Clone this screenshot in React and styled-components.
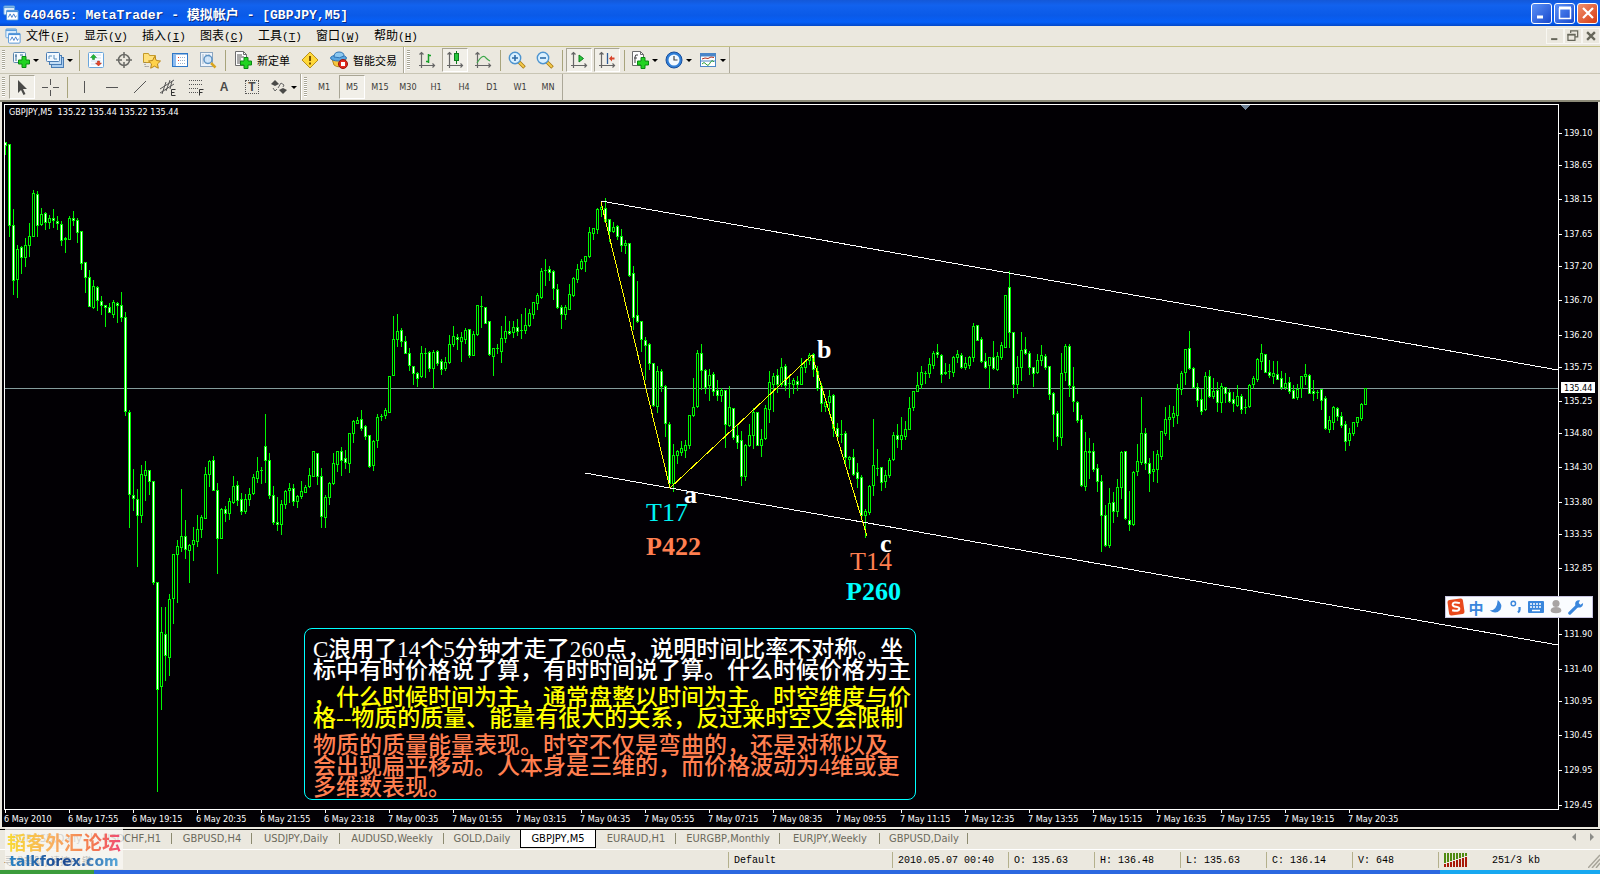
import styled, { createGlobalStyle, css } from "styled-components";

// [high, body top, body bottom, low, kind]  kind: 0 rising, 1 falling, 2 doji
const candles = [
  [142, 142, 145, 154, 1], [144, 144, 225, 236, 1], [209, 225, 280, 294, 1], [245, 249, 279, 297, 0],
  [246, 247, 257, 273, 1], [238, 245, 257, 266, 0], [223, 236, 245, 256, 0], [190, 193, 236, 236, 0],
  [191, 194, 225, 236, 1], [208, 214, 224, 225, 0], [212, 213, 222, 229, 1], [215, 218, 222, 228, 0],
  [209, 218, 220, 227, 1], [216, 221, 223, 229, 1], [221, 224, 240, 245, 1], [237, 238, 239, 252, 1],
  [216, 218, 239, 239, 0], [211, 218, 220, 225, 1], [218, 220, 232, 242, 1], [231, 231, 263, 269, 1],
  [262, 262, 277, 292, 1], [270, 277, 306, 306, 1], [280, 286, 307, 308, 0], [286, 287, 300, 310, 1],
  [296, 301, 305, 314, 1], [305, 305, 307, 326, 1], [303, 307, 312, 312, 1], [300, 302, 314, 317, 0],
  [302, 303, 305, 322, 1], [292, 305, 317, 321, 1], [312, 317, 411, 415, 1], [410, 412, 494, 527, 1],
  [469, 495, 498, 510, 1], [489, 499, 515, 566, 1], [465, 474, 515, 522, 0], [461, 470, 475, 500, 0],
  [470, 470, 481, 494, 1], [481, 481, 582, 584, 1], [582, 582, 689, 791, 1], [607, 632, 686, 709, 0],
  [607, 634, 655, 680, 1], [594, 599, 657, 675, 0], [554, 554, 598, 623, 0], [540, 546, 554, 602, 0],
  [489, 536, 547, 551, 0], [520, 536, 549, 558, 1], [544, 545, 550, 582, 0], [527, 540, 544, 560, 0],
  [515, 529, 541, 546, 0], [515, 517, 529, 537, 0], [467, 474, 518, 518, 0], [460, 461, 474, 486, 0],
  [456, 460, 490, 490, 1], [483, 490, 538, 573, 1], [508, 509, 538, 538, 0], [506, 509, 513, 521, 1],
  [498, 501, 513, 519, 0], [476, 486, 502, 503, 0], [481, 485, 500, 505, 1], [493, 499, 511, 514, 1],
  [494, 499, 511, 513, 0], [488, 494, 499, 505, 0], [474, 477, 493, 494, 0], [457, 471, 478, 482, 0],
  [467, 470, 471, 483, 2], [414, 446, 460, 482, 1], [453, 460, 495, 498, 1], [486, 495, 522, 524, 1],
  [497, 522, 524, 530, 1], [500, 504, 524, 534, 0], [490, 491, 504, 508, 0], [483, 488, 490, 502, 0],
  [484, 488, 501, 505, 1], [495, 496, 501, 507, 0], [481, 491, 496, 498, 0], [485, 487, 492, 492, 0],
  [468, 475, 486, 487, 0], [451, 451, 476, 476, 0], [453, 453, 476, 484, 1], [468, 476, 516, 527, 1],
  [495, 497, 517, 527, 0], [482, 483, 497, 504, 0], [453, 463, 483, 484, 0], [451, 451, 464, 471, 0],
  [447, 451, 460, 475, 1], [450, 458, 462, 468, 1], [433, 433, 463, 472, 0], [420, 421, 433, 442, 0],
  [417, 420, 423, 423, 0], [410, 419, 428, 430, 1], [425, 426, 436, 439, 1], [435, 435, 466, 467, 1],
  [440, 441, 465, 470, 0], [414, 417, 440, 447, 0], [414, 416, 417, 420, 2], [408, 410, 415, 418, 0],
  [376, 376, 412, 412, 0], [316, 339, 375, 375, 0], [314, 331, 339, 346, 0], [328, 330, 341, 346, 1],
  [336, 341, 353, 353, 1], [348, 353, 365, 370, 1], [366, 366, 373, 384, 1], [372, 373, 378, 386, 1],
  [346, 353, 376, 377, 0], [348, 353, 354, 377, 2], [351, 352, 368, 371, 1], [350, 352, 368, 388, 0],
  [350, 351, 363, 365, 1], [359, 361, 369, 374, 1], [357, 362, 368, 370, 0], [335, 344, 362, 363, 0],
  [326, 336, 344, 346, 0], [334, 337, 339, 349, 1], [332, 337, 341, 361, 0], [328, 330, 339, 343, 0],
  [329, 329, 355, 357, 1], [331, 334, 355, 355, 0], [305, 305, 334, 335, 0], [296, 306, 307, 327, 2],
  [307, 307, 323, 323, 1], [321, 321, 354, 355, 1], [348, 348, 356, 375, 0], [344, 348, 349, 353, 2],
  [326, 338, 351, 362, 0], [316, 331, 338, 342, 0], [321, 331, 333, 334, 1], [321, 327, 332, 337, 0],
  [319, 327, 331, 335, 1], [314, 330, 331, 338, 2], [308, 325, 330, 333, 0], [309, 313, 325, 326, 0],
  [302, 302, 314, 318, 0], [293, 295, 303, 309, 0], [268, 271, 297, 298, 0], [259, 270, 271, 285, 2],
  [266, 269, 272, 280, 1], [270, 271, 288, 299, 1], [284, 289, 307, 308, 1], [305, 307, 314, 328, 1],
  [305, 307, 314, 319, 0], [284, 294, 309, 309, 0], [277, 278, 295, 296, 0], [264, 269, 279, 282, 0],
  [259, 261, 268, 269, 0], [256, 256, 261, 271, 0], [227, 232, 256, 257, 0], [228, 228, 233, 239, 0],
  [208, 209, 229, 233, 0], [202, 207, 209, 216, 0], [198, 208, 221, 221, 1], [219, 219, 231, 241, 1],
  [222, 227, 231, 232, 0], [225, 226, 236, 239, 1], [229, 236, 245, 251, 1], [240, 243, 245, 253, 0],
  [243, 243, 275, 276, 1], [266, 273, 317, 329, 1], [281, 315, 321, 322, 1], [321, 321, 339, 351, 1],
  [337, 340, 345, 379, 1], [343, 344, 363, 369, 1], [363, 363, 405, 406, 1], [366, 371, 406, 412, 0],
  [369, 371, 386, 391, 1], [385, 386, 423, 436, 1], [422, 424, 483, 483, 1], [444, 455, 483, 491, 0],
  [450, 451, 455, 463, 0], [441, 448, 452, 455, 0], [440, 445, 450, 457, 0], [415, 415, 445, 448, 0],
  [378, 407, 415, 416, 0], [350, 353, 406, 407, 0], [344, 353, 370, 389, 1], [369, 370, 387, 393, 1],
  [369, 375, 385, 400, 0], [372, 374, 391, 395, 1], [380, 390, 395, 400, 1], [388, 390, 395, 401, 0],
  [390, 390, 424, 447, 1], [386, 407, 425, 426, 0], [408, 408, 437, 439, 1], [424, 435, 442, 448, 1],
  [431, 440, 476, 485, 1], [444, 445, 476, 480, 0], [424, 435, 445, 446, 0], [408, 412, 435, 448, 0],
  [412, 412, 445, 445, 1], [429, 439, 445, 456, 0], [405, 408, 438, 439, 0], [371, 382, 409, 422, 0],
  [373, 376, 384, 411, 0], [369, 375, 384, 392, 1], [358, 367, 384, 386, 0], [364, 366, 385, 390, 1],
  [376, 383, 385, 397, 2], [378, 380, 384, 393, 0], [376, 381, 384, 390, 1], [358, 367, 384, 384, 0],
  [360, 361, 367, 372, 0], [353, 355, 360, 364, 0], [353, 354, 369, 376, 1], [366, 371, 388, 390, 1],
  [383, 386, 403, 411, 1], [401, 402, 406, 411, 0], [390, 396, 402, 414, 0], [394, 395, 428, 436, 1],
  [423, 428, 436, 437, 1], [420, 434, 435, 442, 2], [431, 433, 457, 463, 1], [456, 457, 459, 468, 0],
  [449, 457, 474, 475, 1], [463, 472, 478, 487, 1], [475, 477, 515, 515, 1], [509, 511, 515, 537, 0],
  [485, 486, 512, 514, 0], [419, 465, 485, 495, 0], [449, 468, 469, 475, 2], [467, 467, 482, 490, 1],
  [470, 475, 481, 487, 0], [458, 460, 475, 477, 0], [432, 435, 459, 460, 0], [424, 435, 439, 447, 1],
  [417, 435, 439, 449, 0], [421, 429, 436, 439, 0], [397, 408, 429, 429, 0], [391, 391, 407, 410, 0],
  [372, 385, 391, 391, 0], [366, 372, 384, 388, 0], [371, 373, 374, 383, 2], [358, 364, 373, 377, 0],
  [351, 353, 365, 368, 0], [344, 352, 354, 357, 1], [354, 355, 374, 382, 1], [363, 372, 373, 374, 0],
  [364, 371, 372, 378, 2], [356, 357, 372, 376, 0], [350, 354, 357, 362, 0], [353, 355, 367, 368, 1],
  [357, 363, 367, 369, 0], [356, 357, 365, 368, 0], [323, 326, 357, 361, 0], [325, 325, 340, 340, 1],
  [337, 339, 361, 362, 1], [353, 361, 367, 368, 1], [357, 357, 365, 388, 0], [341, 357, 368, 369, 1],
  [352, 356, 369, 370, 0], [342, 345, 357, 359, 0], [295, 295, 347, 347, 0], [271, 287, 332, 347, 1],
  [332, 332, 384, 397, 1], [356, 367, 384, 393, 0], [332, 350, 367, 380, 0], [337, 349, 353, 354, 1],
  [351, 353, 367, 374, 1], [367, 367, 373, 386, 1], [354, 360, 372, 373, 0], [345, 355, 360, 365, 0],
  [354, 356, 367, 369, 1], [366, 366, 394, 399, 1], [392, 393, 414, 441, 1], [411, 413, 436, 449, 1],
  [353, 373, 437, 445, 0], [344, 346, 372, 380, 0], [344, 346, 385, 396, 1], [367, 386, 401, 411, 1],
  [401, 402, 420, 422, 1], [415, 419, 485, 486, 1], [432, 451, 486, 490, 0], [438, 451, 452, 478, 1],
  [443, 451, 469, 471, 1], [464, 468, 481, 491, 1], [475, 481, 515, 551, 1], [505, 515, 545, 546, 1],
  [488, 503, 545, 547, 0], [492, 502, 511, 522, 1], [479, 487, 511, 516, 0], [451, 452, 487, 498, 0],
  [451, 451, 518, 519, 1], [491, 520, 524, 530, 1], [471, 472, 524, 525, 0], [444, 461, 471, 475, 0],
  [397, 433, 462, 464, 0], [428, 433, 463, 469, 1], [458, 463, 473, 491, 1], [451, 469, 471, 481, 0],
  [450, 454, 469, 482, 0], [431, 431, 456, 459, 0], [407, 419, 433, 435, 0], [405, 417, 419, 439, 0],
  [406, 413, 417, 426, 0], [384, 389, 415, 423, 0], [371, 373, 389, 394, 0], [349, 349, 372, 384, 0],
  [331, 348, 368, 369, 1], [367, 368, 387, 387, 1], [383, 387, 400, 406, 1], [389, 399, 411, 414, 1],
  [372, 376, 409, 410, 0], [370, 376, 396, 397, 1], [378, 391, 396, 398, 0], [382, 390, 402, 411, 1],
  [383, 386, 402, 412, 0], [387, 387, 393, 402, 1], [389, 392, 401, 402, 1], [392, 399, 403, 411, 1],
  [385, 396, 405, 406, 0], [394, 396, 409, 413, 1], [399, 407, 408, 413, 2], [384, 385, 406, 407, 0],
  [376, 378, 384, 388, 0], [358, 359, 379, 381, 0], [344, 353, 361, 369, 0], [354, 354, 372, 372, 1],
  [360, 372, 375, 377, 1], [361, 373, 376, 383, 0], [361, 374, 379, 379, 1], [371, 378, 387, 389, 1],
  [373, 383, 387, 389, 0], [377, 382, 391, 393, 1], [385, 390, 398, 398, 1], [384, 389, 397, 399, 0],
  [376, 376, 388, 397, 0], [364, 374, 376, 384, 0], [374, 375, 393, 393, 1], [380, 391, 393, 400, 1],
  [390, 392, 393, 398, 2], [389, 389, 400, 409, 1], [396, 398, 428, 429, 1], [416, 420, 429, 432, 0],
  [406, 407, 422, 429, 0], [407, 408, 416, 420, 1], [412, 416, 425, 427, 1], [421, 424, 441, 450, 1],
  [428, 433, 440, 445, 0], [422, 422, 433, 435, 0], [417, 417, 422, 426, 0], [403, 404, 418, 420, 0],
  [388, 388, 404, 404, 0],
];

const prices = [
  ["139.10", 133], ["138.65", 165], ["138.15", 199], ["137.65", 234], ["137.20", 266],
  ["136.70", 300], ["136.20", 335], ["135.75", 367], ["135.25", 401], ["134.80", 433],
  ["134.30", 467], ["133.80", 502], ["133.35", 534], ["132.85", 568], ["131.90", 634],
  ["131.40", 669], ["130.95", 701], ["130.45", 735], ["129.95", 770], ["129.45", 805],
];

const times = [
  "6 May 2010", "6 May 17:55", "6 May 19:15", "6 May 20:35", "6 May 21:55", "6 May 23:18",
  "7 May 00:35", "7 May 01:55", "7 May 03:15", "7 May 04:35", "7 May 05:55", "7 May 07:15",
  "7 May 08:35", "7 May 09:55", "7 May 11:15", "7 May 12:35", "7 May 13:55", "7 May 15:15",
  "7 May 16:35", "7 May 17:55", "7 May 19:15", "7 May 20:35",
];

const menus = [
  ["文件", "F"], ["显示", "V"], ["插入", "I"], ["图表", "C"], ["工具", "T"], ["窗口", "W"], ["帮助", "H"],
];

const periods = ["M1", "M5", "M15", "M30", "H1", "H4", "D1", "W1", "MN"];

const tabs = [
  { name: "EURUSD,Daily", width: 90 },
  { name: "USDCHF,H1", width: 80 },
  { name: "GBPUSD,H4", width: 80 },
  { name: "USDJPY,Daily", width: 88 },
  { name: "AUDUSD,Weekly", width: 104 },
  { name: "GOLD,Daily", width: 76, last: true },
  { name: "GBPJPY,M5", width: 76, active: true },
  { name: "EURAUD,H1", width: 80 },
  { name: "EURGBP,Monthly", width: 104 },
  { name: "EURJPY,Weekly", width: 100 },
  { name: "GBPUSD,Daily", width: 88 },
];

const Icon = ({ children, size = 18 }) => (
  <svg width={size} height={size} viewBox="0 0 18 18" aria-hidden="true">
    {children}
  </svg>
);

const Plus = ({ x = 6, y = 6 }) => (
  <path
    transform={`translate(${x} ${y})`}
    d="M4 .5h4V4h3.500v4H8v3.500H4V8H.5V4H4z"
    fill="#22d322"
    stroke="#0a8a12"
  />
);

const LogoIcon = () => (
  <Icon size={16}>
    <rect x="1" y="1" width="12" height="10" rx="1" fill="#e8f4ff" stroke="#5fa0dc" />
    <path d="M1 2.500h12" stroke="#5fa0dc" strokeWidth="2" />
    <rect x="4" y="6" width="13" height="11" rx="1" fill="#fff" stroke="#4a90d8" />
    <path d="M4 7h13" stroke="#4a90d8" strokeWidth="2" />
    <path d="M6 14l2-4 2 4 2-4 2 4 1-2" fill="none" stroke="#3878c8" />
  </Icon>
);

const NewChartIcon = () => (
  <Icon>
    <rect x="1.500" y="1.500" width="12" height="10" rx="1" fill="#f6fbff" stroke="#5a86ae" />
    <path d="M4 3v7M3 5h2M8 4h3" stroke="#3b6d98" />
    <Plus x={6} y={5} />
  </Icon>
);

const ProfilesIcon = () => (
  <Icon>
    <rect x="5.500" y="6.500" width="12" height="10" fill="#a9cdf0" stroke="#4a7db4" />
    <rect x="3.500" y="4.500" width="12" height="9" fill="#c4def6" stroke="#4a7db4" />
    <rect x=".5" y="1.500" width="13" height="9" rx="1" fill="#f2f9ff" stroke="#4a7db4" />
    <path d="M3 8V5h3M8 4v4h3" stroke="#5a8ebc" fill="none" />
  </Icon>
);

const MarketIcon = () => (
  <Icon>
    <rect x="1.500" y="1.500" width="15" height="15" rx="1" fill="#fbfdff" stroke="#6aa6dc" />
    <path d="M4 4h10M4 7h10M4 10h10M4 13h10" stroke="#cfdff0" />
    <path d="M6.500 3.500L9.500 6.500h-2v2h-2v-2h-2z" fill="#1dbb33" stroke="#0f7a20" strokeWidth=".5" />
    <path d="M11.500 15L8.500 12h2v-2h2v2h2z" fill="#e8452a" stroke="#a02a15" strokeWidth=".5" />
  </Icon>
);

const TargetIcon = () => (
  <Icon>
    <circle cx="9" cy="9" r="5.500" fill="none" stroke="#6a6a66" strokeWidth="1.500" />
    <path d="M9 1v6M9 11v6M1 9h6M11 9h6" stroke="#6a6a66" strokeWidth="1.500" />
  </Icon>
);

const FavoritesIcon = () => (
  <Icon>
    <path d="M.5 2.500h5l1 2h6v7H.5z" fill="#ffe07a" stroke="#c49a28" />
    <path d="M2 11v4.500h4" fill="none" stroke="#777" strokeDasharray="1 1" />
    <path
      d="M11.500 5.500l1.900 4 4.100.5-3 2.900.8 4.300-3.800-2-3.800 2 .8-4.300-3-2.900 4.100-.5z"
      fill="#ffd24a"
      stroke="#b98518"
    />
  </Icon>
);

const NavigatorIcon = () => (
  <Icon>
    <rect x="1.500" y="2.500" width="15" height="13" fill="#fff" stroke="#2f78c8" />
    <path d="M1.500 3h15" stroke="#2f78c8" />
    <rect x="2" y="4" width="3" height="11" fill="#8ebcf0" />
    <path d="M7 6.500h1M7 9.500h1" stroke="#e03a2a" />
    <path d="M9 6.500h6M9 9.500h6M7 12.500h8" stroke="#9db4cc" strokeDasharray="1 1" />
  </Icon>
);

const TesterIcon = () => (
  <Icon>
    <rect x="1.500" y="1.500" width="12" height="14" fill="#eef4fb" stroke="#8ca6c0" />
    <path d="M4 3v10M7 3v10M10 3v10" stroke="#a3b7cc" />
    <circle cx="9" cy="8.500" r="4" fill="#cfe6fb" fillOpacity=".8" stroke="#5e93c4" strokeWidth="1.500" />
    <path d="M12 12l4.500 4.500" stroke="#d9a520" strokeWidth="2.500" />
  </Icon>
);

const PageIcon = () => (
  <>
    <path d="M1.500 .5h8l3 3v11h-11z" fill="#fdfdfd" stroke="#6c6c6c" />
    <path d="M9.500 .5v3h3" fill="none" stroke="#6c6c6c" />
  </>
);

const OrderIcon = () => (
  <Icon>
    <PageIcon />
    <path d="M3 4h5M3 6h7M3 8h4M3 10h4M3 12h3" stroke="#555" />
    <Plus />
  </Icon>
);

const WarningIcon = () => (
  <Icon>
    <path d="M9 1l8 8-8 8-8-8z" fill="#ffd83a" stroke="#b8901a" strokeLinejoin="round" />
    <path d="M9 5v5M9 11.500v2" stroke="#7a5200" strokeWidth="2" />
  </Icon>
);

const ExpertIcon = () => (
  <Icon>
    <path d="M2 8l2 6q5 4 10-1l2-5z" fill="#f6c63e" stroke="#b98a1c" />
    <ellipse cx="8.500" cy="7" rx="8" ry="3" fill="#5aa6e0" stroke="#2f74b4" />
    <path d="M4 6q0-5 5-5 5 0 5 4-4 3-10 1z" fill="#8cc8f0" stroke="#2f74b4" />
    <circle cx="13" cy="13" r="4.500" fill="#e0281c" stroke="#9c150c" />
    <rect x="11" y="11" width="4" height="4" fill="#fff" />
  </Icon>
);

const Axes = () => (
  <path d="M3.500 1v16M1 14.500h16M1.500 3.500l2-2 2 2M14.500 12.500l2 2-2 2" fill="none" stroke="#666" strokeWidth="1.200" />
);

const BarsIcon = () => (
  <Icon>
    <Axes />
    <path d="M10.500 3v9M8 10.500h2M11 4.500h2" stroke="#16a028" strokeWidth="1.500" />
  </Icon>
);

const CandlesIcon = () => (
  <Icon>
    <Axes />
    <path d="M10.500 0v13" stroke="#0f7c1c" />
    <rect x="8.500" y="2.500" width="4" height="7" fill="#27c83c" stroke="#0f7c1c" />
  </Icon>
);

const LineIcon = () => (
  <Icon>
    <Axes />
    <path d="M3 12q6-10 9-5 2 2 4 3" fill="none" stroke="#3da84a" strokeWidth="1.200" />
  </Icon>
);

const ZoomIcon = ({ plus }) => (
  <Icon>
    <path d="M11 11l5.500 5.500" stroke="#a87a14" strokeWidth="3.500" />
    <path d="M11 11l5 5" stroke="#f4cb4c" strokeWidth="1.800" />
    <circle cx="7" cy="7" r="5.700" fill="#d9f0ff" stroke="#4d94cf" strokeWidth="1.400" />
    <path d={plus ? "M4 7h6M7 4v6" : "M4 7h6"} stroke="#2f6ca8" strokeWidth="1.600" />
  </Icon>
);

const ScrollIcon = () => (
  <Icon>
    <Axes />
    <path d="M9 4l4.500 3.500L9 11z" fill="#27c83c" stroke="#0f7c1c" />
  </Icon>
);

const ShiftIcon = () => (
  <Icon>
    <Axes />
    <path d="M9.500 2v11" stroke="#2f5d98" strokeWidth="1.300" />
    <path d="M11 7.500l3-3v2h2.500v2H14v2z" fill="#d8432a" />
  </Icon>
);

const IndicatorIcon = () => (
  <Icon>
    <PageIcon />
    <path d="M7 4q-3-1-3 2v6M3 7h3" fill="none" stroke="#444" />
    <Plus />
  </Icon>
);

const ClockIcon = () => (
  <Icon>
    <circle cx="9" cy="9" r="8" fill="#2f7fd8" stroke="#1a4f9c" />
    <circle cx="9" cy="9" r="5.500" fill="#f2f9ff" />
    <path d="M9 5v4h3.500" fill="none" stroke="#444" strokeWidth="1.200" />
  </Icon>
);

const TemplateIcon = () => (
  <Icon>
    <rect x="1.500" y="2.500" width="15" height="13" fill="#fff" stroke="#4a86c8" />
    <path d="M1.500 4h15" stroke="#4a86c8" strokeWidth="3" />
    <path d="M2 10h14" stroke="#4a86c8" />
    <path d="M3 8l3-1 3 .5 3-1.500 3 .5" fill="none" stroke="#b03020" />
    <path d="M3 13q2-3 4 0t4-1 4-1" fill="none" stroke="#2da03a" />
  </Icon>
);

const drawTools = {
  cursor: <path d="M5 2v13l3-3 2.500 5 2-1L10 11h4z" fill="#4a4a48" />,
  cross: <path d="M9.500 1v6M9.500 12v6M1 9.500h6M12 9.500h6" stroke="#555" />,
  vertical: <path d="M9.500 3v12" stroke="#555" />,
  horizontal: <path d="M3 9.500h12" stroke="#555" />,
  trend: <path d="M3 15L15 3" stroke="#555" />,
  channel: (
    <>
      <path d="M1 11L15 2M1 15L15 6M3 16L7 4M7 13l4-11M11 11l2-8" stroke="#555" />
      <path d="M16.500 11.500h-4v6h4M12.500 14.500h3" fill="none" stroke="#333" />
    </>
  ),
  fibo: (
    <>
      <path d="M2 2.500h14M2 6.500h14M2 10.500h9M2 14.500h9" stroke="#555" strokeDasharray="1 1" />
      <path d="M12.500 17.500v-6h4M12.500 14.500h3" fill="none" stroke="#333" />
    </>
  ),
};

const ArrowsIcon = () => (
  <Icon>
    <path d="M5 2l4 4-4 2-4-2zM13 16l4-4-4-2-4 2z" fill="#4a4a48" />
    <path d="M3 10l2 3 2-2M8 10l3-5M11 5l3 2-1 2" fill="none" stroke="#666" />
  </Icon>
);

const plotSlope = "M601 201L1558 370M585 473L1558 645";

const Chart = () => (
  <Plot role="img" aria-label="GBPJPY M5">
    <g transform="translate(-2 -102)" shapeRendering="crispEdges">
      <path d="M4.500 809V104.500H1558.500V809.500H4" fill="none" stroke="#fff" />
      <path d="M5 388.500H1558" stroke="#849c9c" />
      {candles.map(([high, top, bottom, low, kind], i) => {
        const x = 5 + i * 4;
        const height = kind === 2 ? 1 : bottom - top + 1;
        return (
          <g key={i}>
            <rect x={x} y={high} width="1" height={low - high + 1} fill="#00f800" />
            <rect x={i ? x - 1 : x} y={top} width={i ? 3 : 2} height={height} fill="#00f800" />
            {height > 2 && (
              <rect x={x} y={top + 1} width="1" height={height - 2} fill={kind ? "#fff" : "#020004"} />
            )}
          </g>
        );
      })}
      <path d={plotSlope} stroke="#fff" />
      <path d="M601 202L670 488L812 355L867 536" fill="none" stroke="#ffff00" />
      <path d="M1240 105h10l-5 5z" fill="#708498" />
      {prices.map(([label, y]) => (
        <g key={label}>
          <path d={`M1559 ${y + 0.5}h3`} stroke="#fff" />
          <AxisText x="1564" y={y + 3}>{label}</AxisText>
        </g>
      ))}
      <rect x="1561" y="382" width="34" height="11" fill="#fff" />
      <AxisText x="1564" y="391" fill="#000">135.44</AxisText>
      {times.map((label, i) => (
        <g key={label}>
          <path d={`M${5.5 + i * 64} 810v3`} stroke="#fff" />
          <AxisText x={4 + i * 64} y="822">{label}</AxisText>
        </g>
      ))}
      <Mark x="684" y="503">a</Mark>
      <Mark x="817" y="358">b</Mark>
      <Mark x="880" y="552">c</Mark>
      <Mark x="646" y="521" fill="#00f4f4" $light>T17</Mark>
      <Mark x="646" y="555" fill="#ff7f50">P422</Mark>
      <Mark x="850" y="570" fill="#ff7f50" $light>T14</Mark>
      <Mark x="846" y="600" fill="#00ffff">P260</Mark>
    </g>
  </Plot>
);

const ImeBar = () => (
  <Ime>
    <ImeButton aria-label="S">
      <Icon size={20}>
        <rect x="2" y="2" width="14" height="14" rx="2" fill="#e8481c" transform="rotate(-8 9 9)" />
        <path d="M12.500 5.500q-6-1.500-6.500 1-.3 1.800 3 2.300t3 2q-.5 2.500-6.500 1.200" fill="none" stroke="#fff" strokeWidth="1.800" />
      </Icon>
    </ImeButton>
    <ImeButton>中</ImeButton>
    <ImeButton aria-label="moon">
      <Icon size={16}>
        <path d="M11 1q6 5 3 11-5 6-12 1 8 0 9-12z" fill="#3a86dc" />
      </Icon>
    </ImeButton>
    <ImeButton aria-label="punctuation">
      <Icon size={16}>
        <circle cx="6" cy="5" r="2.500" fill="none" stroke="#3a86dc" strokeWidth="1.600" />
        <path d="M13 9v3q0 2-2 3" fill="none" stroke="#3a86dc" strokeWidth="2.500" />
      </Icon>
    </ImeButton>
    <ImeButton aria-label="keyboard">
      <Icon>
        <rect x="1" y="3" width="16" height="12" rx="1" fill="#3a86dc" />
        <path d="M3 6h12M3 9h12" stroke="#fff" strokeWidth="1.500" strokeDasharray="2 1" />
        <path d="M5 12.500h8" stroke="#fff" strokeWidth="1.500" />
      </Icon>
    </ImeButton>
    <ImeButton aria-label="user">
      <Icon size={16}>
        <circle cx="9" cy="5" r="4" fill="#a8a4a4" />
        <path d="M3 13q0-4 6-4t6 4q0 3-6 3t-6-3z" fill="#a8a4a4" />
      </Icon>
    </ImeButton>
    <ImeButton aria-label="settings">
      <Icon size={16}>
        <path d="M2 16L10 8" stroke="#3a86dc" strokeWidth="3.500" strokeLinecap="round" />
        <path d="M13.500 1.500q-5-1-5.500 4 .5 5 6 4 3-1 3-5l-3 2-2-2z" fill="#3a86dc" />
      </Icon>
    </ImeButton>
  </Ime>
);

const App = () => {
  return (
    <Window>
      <GlobalStyle />
      <TitleBar>
        <LogoIcon />
        <Title>640465: MetaTrader - 模拟帐户 - [GBPJPY,M5]</Title>
        <WindowButton aria-label="Minimize">
          <Icon><path d="M4 13h6" stroke="#fff" strokeWidth="3" /></Icon>
        </WindowButton>
        <WindowButton aria-label="Maximize">
          <Icon><path d="M3.500 4v10.500h11V4M3 4h12" fill="none" stroke="#fff" strokeWidth="1.500" /><path d="M3 4h12" stroke="#fff" strokeWidth="3" /></Icon>
        </WindowButton>
        <WindowButton aria-label="Close" $close>
          <Icon><path d="M4 4l10 10M14 4L4 14" stroke="#fff" strokeWidth="2.200" /></Icon>
        </WindowButton>
      </TitleBar>

      <MenuBar>
        <LogoIcon />
        <MenuList>
          {menus.map(([label, key]) => (
            <MenuButton key={key}>
              {label}
              <Accel>(<u>{key}</u>)</Accel>
            </MenuButton>
          ))}
        </MenuList>
        <ChildButton aria-label="Minimize chart">
          <Icon size={14}><path d="M4 13h8" stroke="#66665a" strokeWidth="2.500" /></Icon>
        </ChildButton>
        <ChildButton aria-label="Restore chart">
          <Icon size={14}><path d="M6 5V2.500h9V10h-3M2.500 7h9v7.500h-9z" fill="none" stroke="#66665a" strokeWidth="1.600" /><path d="M2 7.500h10" stroke="#66665a" strokeWidth="2" /></Icon>
        </ChildButton>
        <ChildButton aria-label="Close chart">
          <Icon size={14}><path d="M4 4l10 10M14 4L4 14" stroke="#66665a" strokeWidth="3" /></Icon>
        </ChildButton>
      </MenuBar>

      <ToolRow>
        <Band>
          <Grip />
          <Tool $drop aria-label="New chart"><NewChartIcon /><Caret /></Tool>
          <Tool $drop aria-label="Profiles"><ProfilesIcon /><Caret /></Tool>
          <Divider />
          <Tool aria-label="Market watch"><MarketIcon /></Tool>
          <Tool aria-label="Data window"><TargetIcon /></Tool>
          <Tool aria-label="Navigator"><FavoritesIcon /></Tool>
          <Tool aria-label="Terminal"><NavigatorIcon /></Tool>
          <Tool aria-label="Strategy tester"><TesterIcon /></Tool>
          <Divider />
          <TextTool><OrderIcon />新定单</TextTool>
          <Tool aria-label="MetaEditor"><WarningIcon /></Tool>
          <TextTool><ExpertIcon />智能交易</TextTool>
        </Band>
        <Band>
          <Grip />
          <Tool aria-label="Bar chart"><BarsIcon /></Tool>
          <Tool aria-label="Candlesticks" $on><CandlesIcon /></Tool>
          <Tool aria-label="Line chart"><LineIcon /></Tool>
          <Divider />
          <Tool aria-label="Zoom in"><ZoomIcon plus /></Tool>
          <Tool aria-label="Zoom out"><ZoomIcon /></Tool>
          <Divider />
          <Tool aria-label="Auto scroll" $on><ScrollIcon /></Tool>
          <Tool aria-label="Chart shift" $on><ShiftIcon /></Tool>
          <Divider />
          <Tool $drop aria-label="Indicators"><IndicatorIcon /><Caret /></Tool>
          <Tool $drop aria-label="Periods"><ClockIcon /><Caret /></Tool>
          <Tool $drop aria-label="Templates"><TemplateIcon /><Caret /></Tool>
        </Band>
      </ToolRow>

      <ToolRow>
        <Band>
          <Grip />
          <Tool aria-label="Cursor" $on><Icon>{drawTools.cursor}</Icon></Tool>
          <Tool aria-label="Crosshair"><Icon>{drawTools.cross}</Icon></Tool>
          <Divider />
          <Tool aria-label="Vertical line"><Icon>{drawTools.vertical}</Icon></Tool>
          <Tool aria-label="Horizontal line"><Icon>{drawTools.horizontal}</Icon></Tool>
          <Tool aria-label="Trendline"><Icon>{drawTools.trend}</Icon></Tool>
          <Tool aria-label="Channel"><Icon>{drawTools.channel}</Icon></Tool>
          <Tool aria-label="Fibonacci"><Icon>{drawTools.fibo}</Icon></Tool>
          <Tool><Letter>A</Letter></Tool>
          <Tool><Letter $boxed>T</Letter></Tool>
          <Tool $drop aria-label="Arrows"><ArrowsIcon /><Caret /></Tool>
        </Band>
        <Band>
          <Grip />
          {periods.map((p) => (
            <Tool key={p} $on={p === "M5"}>{p}</Tool>
          ))}
        </Band>
      </ToolRow>

      <ChartPanel>
        <Chart />
        <Quote>GBPJPY,M5&nbsp; 135.22 135.44 135.22 135.44</Quote>
        <Note>
          <NoteText>
            C浪用了14个5分钟才走了260点，说明时间比率不对称。坐<br />
            标中有时价格说了算，有时时间说了算。什么时候价格为主
          </NoteText>
          <NoteText $color="#ffff00">
            ，什么时候时间为主，通常盘整以时间为主。时空维度与价<br />
            格--物质的质量、能量有很大的关系，反过来时空又会限制
          </NoteText>
          <NoteText $color="#ff7f50">
            物质的质量能量表现。时空不仅是弯曲的，还是对称以及<br />
            会出现扁平移动。人本身是三维的，而价格波动为4维或更<br />
            多维数表现。
          </NoteText>
        </Note>
        <ImeBar />
      </ChartPanel>

      <Footer>
        <TabBar>
          {tabs.map((tab) => (
            <Tab key={tab.name} $width={tab.width} $active={tab.active} $last={tab.last}>
              {tab.name}
            </Tab>
          ))}
          <TabArrows>
            <button aria-label="Scroll left"><svg width="5" height="8"><path d="M4 0v8L0 4z" fill="#8c8c88" /></svg></button>
            <button aria-label="Scroll right"><svg width="5" height="8"><path d="M1 0v8l4-4z" fill="#8c8c88" /></svg></button>
          </TabArrows>
        </TabBar>
        <StatusBar>
          <Hint>寻求帮助,请按F1键</Hint>
          <Cell $width={164}>Default</Cell>
          <Cell $width={116}>2010.05.07 00:40</Cell>
          <Cell $width={86}>O: 135.63</Cell>
          <Cell $width={86}>H: 136.48</Cell>
          <Cell $width={86}>L: 135.63</Cell>
          <Cell $width={86}>C: 136.14</Cell>
          <Cell $width={86}>V: 648</Cell>
          <Cell $width={162}>
            <svg width="24" height="14" aria-hidden="true">
              {[0, 1, 2, 3, 4, 5, 6, 7].map((n) => (
                <g key={n}>
                  <rect x={n * 3} y="0" width="2" height={10 - n} fill="#4f8a10" />
                  <rect x={n * 3} y={11 - n} width="2" height={3 + n} fill="#a81808" />
                </g>
              ))}
            </svg>
            <Traffic>251/3 kb</Traffic>
            <svg width="12" height="16" aria-hidden="true">
              <path d="M0 16L12 3M4 16l8-9M8 16l4-5" stroke="#a8a59a" strokeWidth="1.500" />
            </svg>
          </Cell>
        </StatusBar>
        <Watermark>
          <WatermarkName>韬客外汇论坛</WatermarkName>
          <WatermarkSite>talkforex.com</WatermarkSite>
        </Watermark>
      </Footer>
      <Taskbar />
    </Window>
  );
};

const GlobalStyle = createGlobalStyle`
  * {
    box-sizing: border-box;
  }
  body {
    margin: 0;
    background: #ece9d8;
  }
  button {
    margin: 0;
    padding: 0;
    border: none;
    background: none;
    color: inherit;
    font: inherit;
  }
  svg {
    display: block;
    flex: none;
  }
`;

const Window = styled.div`
  display: flex;
  flex-direction: column;
  min-height: 100vh;
  overflow: hidden;
  background: #ebe8df;
  color: #000;
  font: 9px "DejaVu Sans Condensed", "Noto Sans CJK SC", sans-serif;
`;

const TitleBar = styled.header`
  display: flex;
  align-items: center;
  gap: 2px;
  height: 26px;
  padding: 0 2px 0 3px;
  background: linear-gradient(#1458d8, #1262ee 20%, #0a5ae8 60%, #0660f8 85%, #0448c8);
`;

const Title = styled.h1`
  flex: 1;
  margin: 0 0 0 2px;
  color: #fff;
  font: bold 13px "Liberation Mono", "Noto Sans CJK SC", monospace;
  text-shadow: 1px 1px 0 #0a2c80;
`;

const WindowButton = styled.button`
  display: flex;
  align-items: center;
  justify-content: center;
  width: 21px;
  height: 21px;
  border: 1px solid #fff;
  border-radius: 3px;
  background: ${({ $close }) =>
    $close ? "linear-gradient(135deg, #f0906c, #d83c14)" : "linear-gradient(135deg, #5c92f8, #1848cc)"};
`;

const MenuBar = styled.nav`
  display: flex;
  align-items: center;
  height: 21px;
  padding-left: 5px;
  border-bottom: 1px solid #c4c084;
  font-size: 12px;
`;

const MenuList = styled.div`
  display: flex;
  flex: 1;
  padding-left: 5px;
`;

const MenuButton = styled.button`
  width: 58px;
  line-height: 16px;
  text-align: left;
  white-space: nowrap;
`;

const Accel = styled.span`
  font: 11px "Liberation Mono", monospace;
`;

const ChildButton = styled.button`
  display: flex;
  align-items: center;
  justify-content: center;
  width: 18px;
  height: 16px;
  border: 1px solid #f8f7f2;
`;

const ToolRow = styled.div`
  display: flex;
  height: 27px;
  border-bottom: 1px solid #c8c5b4;

  & + & {
    height: 28px;
    border-bottom: 2px solid #8c8a78;
  }
`;

const Band = styled.div`
  display: flex;
  align-items: center;
  border-right: 1px solid #aca899;

  & + & {
    border-left: 1px solid #fff;
  }
`;

const Grip = styled.span`
  width: 3px;
  height: 20px;
  margin: 0 3px 0 2px;
  background: repeating-linear-gradient(#a8a595 0 1px, #fff 1px 2px);
`;

const Divider = styled.span`
  flex: none;
  width: 6px;
  height: 21px;
  background: linear-gradient(#a8a47c, #a8a47c) center / 1px 100% no-repeat;
`;

const Tool = styled.button`
  display: flex;
  align-items: center;
  justify-content: center;
  gap: 3px;
  width: ${({ $drop }) => ($drop ? 34 : 28)}px;
  height: 24px;
  color: #3c3c38;

  ${({ $on }) =>
    $on &&
    css`
      width: 26px;
      margin: 0 1px;
      border: 1px solid;
      border-color: #a8a595 #fff #fff #a8a595;
      background: #f1efe8;
    `}
`;

const TextTool = styled(Tool)`
  justify-content: flex-start;
  gap: 5px;
  width: auto;
  padding: 0 6px;
  color: #000;
  font-size: 11px;
`;

const Caret = styled.span`
  border: 3px solid transparent;
  border-top: 3px solid #000;
  border-bottom: none;
`;

const Letter = styled.span`
  color: #4a4a48;
  font: bold 12px "Liberation Sans", sans-serif;

  ${({ $boxed }) =>
    $boxed &&
    css`
      width: 14px;
      border: 1px dotted #555;
      line-height: 12px;
    `}
`;

const ChartPanel = styled.main`
  position: relative;
  flex: 1;
  min-height: 725px;
  margin: 0 2px;
  background: #020004;
`;

const Plot = styled.svg`
  position: absolute;
  inset: 0;
  width: 100%;
  height: 100%;
`;

const AxisText = styled.text.attrs(({ fill }) => ({ fill: fill || "#fff" }))`
  font: 9px "DejaVu Sans Condensed", sans-serif;
`;

const Mark = styled.text.attrs(({ fill }) => ({ fill: fill || "#fff" }))`
  font: 26px "Liberation Serif", serif;
  font-weight: ${({ $light }) => ($light ? 400 : 700)};
`;

const Quote = styled.div`
  position: absolute;
  top: 4px;
  left: 7px;
  color: #fff;
  line-height: 12px;
`;

const Note = styled.section`
  position: absolute;
  top: 526px;
  left: 302px;
  width: 612px;
  height: 172px;
  padding: 10px 8px 0;
  border: 1px solid #00ffff;
  border-radius: 8px;
`;

const NoteText = styled.p`
  margin: 0 0 6px;
  color: ${({ $color }) => $color || "#fff"};
  font: 500 23px/21px "Liberation Serif", "Noto Sans CJK SC", serif;
  white-space: nowrap;
`;

const Ime = styled.div`
  position: absolute;
  top: 494px;
  right: 5px;
  display: flex;
  align-items: center;
  height: 22px;
  padding: 0 6px 0 0;
  border: 1px solid #c8c4e0;
  background: #fafcff;
`;

const ImeButton = styled.button`
  display: flex;
  align-items: center;
  justify-content: center;
  width: 20px;
  height: 20px;
  color: #3a86dc;
  font: bold 15px "Noto Sans CJK SC", sans-serif;
`;

const Footer = styled.footer`
  position: relative;
`;

const TabBar = styled.div`
  display: flex;
  height: 23px;
  padding: 0 2px 2px;
  border-bottom: 1px solid #fff;
  background: linear-gradient(#000, #000) 0 2px / 100% 1px no-repeat;
  font-size: 11px;
`;

const Tab = styled.button`
  position: relative;
  width: ${({ $width }) => $width}px;
  height: 19px;
  margin-top: 2px;
  color: #6c6a5c;

  &::after {
    content: "";
    position: absolute;
    top: 4px;
    right: 0;
    height: 11px;
    border-right: 1px solid ${({ $last, $active }) => ($last || $active ? "transparent" : "#8c8a70")};
  }

  ${({ $active }) =>
    $active &&
    css`
      border: 1px solid #000;
      background: #fff;
      color: #000;
    `}
`;

const TabArrows = styled.div`
  display: flex;
  align-items: center;
  gap: 12px;
  margin-left: auto;
  padding-right: 4px;
`;

const StatusBar = styled.div`
  display: flex;
  align-items: center;
  height: 20px;
  font: 10px "Liberation Mono", "Noto Sans CJK SC", monospace;
`;

const Hint = styled.span`
  flex: 1;
  padding-left: 4px;
`;

const Cell = styled.span`
  display: flex;
  align-items: center;
  width: ${({ $width }) => $width}px;
  height: 16px;
  padding-left: 5px;
  border-left: 1px solid #b4b08c;
`;

const Traffic = styled.span`
  flex: 1;
  padding-left: 24px;
`;

const Watermark = styled.div`
  position: absolute;
  top: 0;
  left: 5px;
  width: 118px;
  height: 42px;
  padding-top: 4px;
  background: rgba(250, 248, 244, 0.75);
  text-align: center;
`;

const WatermarkName = styled.div`
  background: linear-gradient(90deg, #f8dc30, #f8b060 40%, #f47850 75%, #f04878);
  background-clip: text;
  color: transparent;
  font: bold 19px/22px "Noto Sans CJK SC", sans-serif;
`;

const WatermarkSite = styled.div`
  background: linear-gradient(90deg, #2c88c8, #1c4890 50%, #5cb0e0);
  background-clip: text;
  color: transparent;
  font: bold 14px/16px "DejaVu Sans", sans-serif;
`;

const Taskbar = styled.div`
  height: 4px;
  background: linear-gradient(90deg, #3c9c3c 94px, #2c68e0 94px 90%, #18a8f0 90%);
`;

export default App;
